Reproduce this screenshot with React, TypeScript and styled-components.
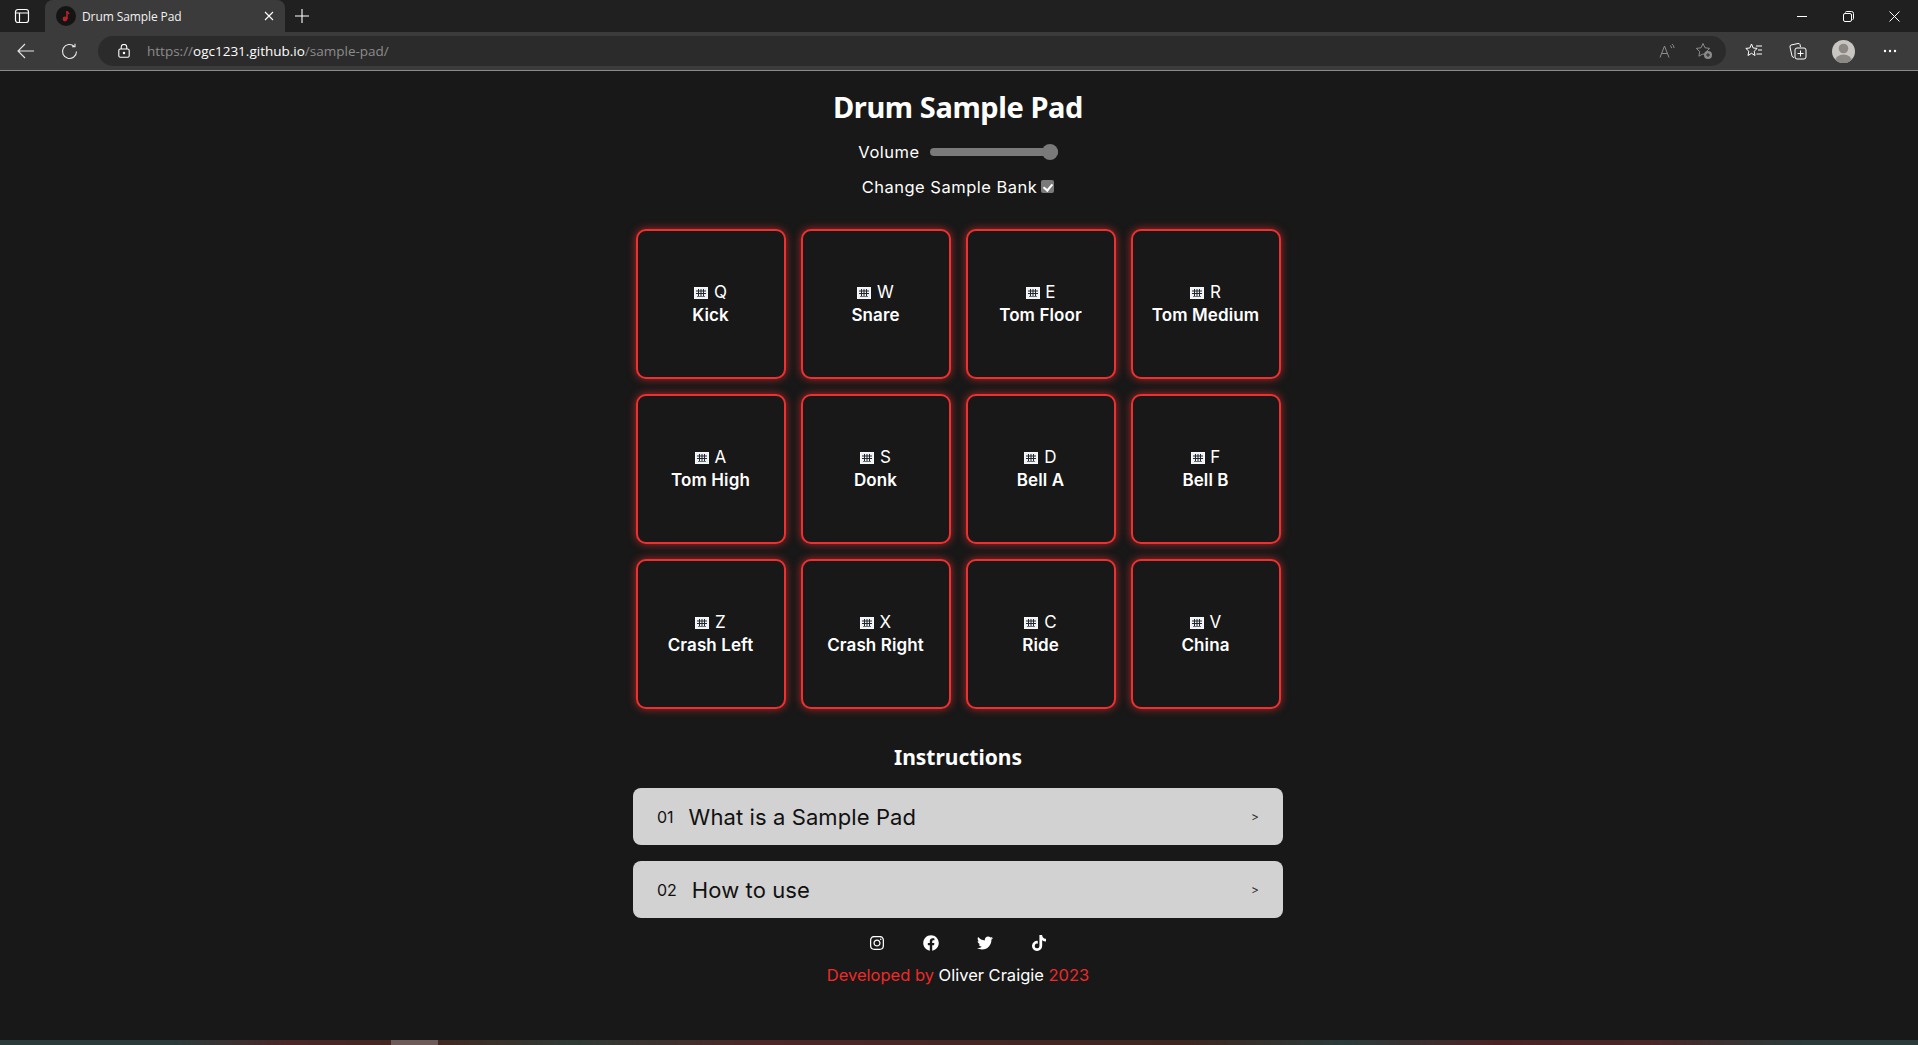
import React from "react"
import styled, {createGlobalStyle} from "styled-components"
import {FaFacebook, FaInstagram, FaTiktok, FaTwitter} from "react-icons/fa"

const pads = [
    {key: "Q", name: "Kick"},
    {key: "W", name: "Snare"},
    {key: "E", name: "Tom Floor"},
    {key: "R", name: "Tom Medium"},
    {key: "A", name: "Tom High"},
    {key: "S", name: "Donk"},
    {key: "D", name: "Bell A"},
    {key: "F", name: "Bell B"},
    {key: "Z", name: "Crash Left"},
    {key: "X", name: "Crash Right"},
    {key: "C", name: "Ride"},
    {key: "V", name: "China"},
]

const KeyboardIcon = () => (
    <KeyIcon viewBox="0 0 14 12" aria-hidden="true">
        <rect x="0" y="0" width="14" height="12" fill="#f8f8f8" />
        <rect x="1" y="1" width="12" height="10" fill="#eef2f6" />
        <path d="M2 4h10M2 6.500h10M4.500 2v7M7 2v7M9.500 2v7" stroke="#23262b" strokeWidth="1" fill="none" />
        <path d="M3 9.500h8" stroke="#6a6f76" strokeWidth="1" />
    </KeyIcon>
)

function Browser()
{
    return (
        <Chrome>
            <TabStrip>
                <ChromeIcon width="16" height="16" viewBox="0 0 16 16" fill="none" stroke="#fff" strokeWidth="1.2" style={{marginLeft: 14}}>
                    <rect x="1.500" y="1.500" width="13" height="13" rx="2.500" />
                    <path d="M1.500 5h13M5.500 5v9.500" />
                </ChromeIcon>
                <Tab>
                    <Favicon>
                        <svg width="10" height="12" viewBox="0 0 10 12" fill="none" stroke="#b5232b" strokeWidth="1.6">
                            <path d="M6 1v8" />
                            <circle cx="4" cy="9" r="1.600" fill="#b5232b" />
                            <path d="M6 1.200c.4 1.400 1.600 1.800 2.200 2.800" />
                        </svg>
                    </Favicon>
                    <TabTitle>Drum Sample Pad</TabTitle>
                    <svg width="10" height="10" viewBox="0 0 10 10" stroke="#fff" strokeWidth="1.1">
                        <path d="M1 1l8 8M9 1l-8 8" />
                    </svg>
                </Tab>
                <ChromeIcon width="14" height="14" viewBox="0 0 14 14" stroke="#fff" strokeWidth="1.1" style={{marginLeft: 10}}>
                    <path d="M7 0v14M0 7h14" />
                </ChromeIcon>
                <WindowControls>
                    <svg width="11" height="11" viewBox="0 0 11 11" stroke="#fff" strokeWidth="1"><path d="M0 5.500h10" /></svg>
                    <svg width="11" height="11" viewBox="0 0 11 11" fill="none" stroke="#fff" strokeWidth="1">
                        <rect x="0.500" y="2.500" width="8" height="8" rx="1.500" />
                        <path d="M2.500 1.500q0-1 1-1h5q2 0 2 2v5q0 1-1 1" />
                    </svg>
                    <svg width="11" height="11" viewBox="0 0 11 11" stroke="#fff" strokeWidth="1"><path d="M.5.5l10 10M10.500.5l-10 10" /></svg>
                </WindowControls>
            </TabStrip>
            <Toolbar>
                <ChromeIcon width="18" height="16" viewBox="0 0 18 16" fill="none" stroke="#e8e8e8" strokeWidth="1.1" style={{marginLeft: 17}}>
                    <path d="M17 8H1M8 1L1 8l7 7" />
                </ChromeIcon>
                <ChromeIcon width="17" height="17" viewBox="0 0 17 17" fill="none" stroke="#e8e8e8" strokeWidth="1.1" style={{marginLeft: 26}}>
                    <path d="M15.500 8.500a7 7 0 1 1-2.200-5.100M14 .8v3h-3" />
                </ChromeIcon>
                <AddressBar>
                    <svg width="12" height="14" viewBox="0 0 12 14" fill="none" stroke="#fff" strokeWidth="1.1">
                        <rect x="0.800" y="5" width="10.400" height="8.200" rx="1.500" />
                        <path d="M3.200 5V3.200a2.800 2.800 0 0 1 5.600 0V5" />
                        <circle cx="6" cy="9" r="0.700" fill="#fff" />
                    </svg>
                    <Url>https://<b>ogc1231.github.io</b>/sample-pad/</Url>
                    <AddressActions>
                        <svg width="16" height="16" viewBox="0 0 16 16" fill="none" stroke="#8c8c8c" strokeWidth="1">
                            <path d="M1 14.500L5.500 3l4.500 11.500M2.700 10.500h5.600M11 2.500q1.600.8 1.600 2.600M13 1q2 1.300 2 4" />
                        </svg>
                        <svg width="18" height="18" viewBox="0 0 18 18" fill="none" stroke="#8c8c8c" strokeWidth="1">
                            <path d="M8 1.500l2 4.300 4.700.6-3.400 3.200.8 4.600L8 11.900l-4.100 2.300.8-4.600L1.300 6.400l4.700-.6z" />
                            <circle cx="13" cy="13" r="4" fill="#8c8c8c" stroke="none" />
                            <path d="M13 11v4M11 13h4" stroke="#2b2b2b" />
                        </svg>
                    </AddressActions>
                </AddressBar>
                <ToolActions>
                    <svg width="18" height="18" viewBox="0 0 18 18" fill="none" stroke="#fff" strokeWidth="1">
                        <path d="M6.500 2l1.700 4 4 .4-3 2.800.8 4.300-3.500-2.200-3.500 2.200.8-4.300-3-2.800 4-.4zM11 4h6M13 8h4M11.500 12H17" />
                    </svg>
                    <svg width="18" height="18" viewBox="0 0 18 18" fill="none" stroke="#fff" strokeWidth="1">
                        <path d="M5 15.500q-1.500 0-2-1.500L1 5q-.3-1.500 1-2l7-1.500q1.500-.2 2 1L11.500 5" />
                        <rect x="6" y="6" width="11" height="11" rx="2" />
                        <path d="M11.500 8.500v6M8.500 11.500h6" />
                    </svg>
                    <Avatar>
                        <svg width="23" height="23" viewBox="0 0 23 23">
                            <circle cx="11.500" cy="8.500" r="4.800" fill="#8c8985" />
                            <ellipse cx="11.500" cy="21" rx="8.500" ry="6.500" fill="#8c8985" />
                        </svg>
                    </Avatar>
                    <svg width="14" height="4" viewBox="0 0 14 4" fill="#fff">
                        <circle cx="2" cy="2" r="1.200" />
                        <circle cx="7" cy="2" r="1.200" />
                        <circle cx="12" cy="2" r="1.200" />
                    </svg>
                </ToolActions>
            </Toolbar>
        </Chrome>
    )
}

export default function App()
{
    return (
        <Page>
            <GlobalStyle />
            <Browser />
            <Main>
                <Title>Drum Sample Pad</Title>
                <VolumeRow>
                    <label htmlFor="volume">Volume</label>
                    <VolumeSlider id="volume" type="range" min="0" max="1" step="0.01" defaultValue="1" />
                </VolumeRow>
                <BankRow>
                    <label htmlFor="bank">Change Sample Bank</label>
                    <BankCheck id="bank" type="checkbox" defaultChecked />
                </BankRow>
                <PadGrid>
                    {pads.map(pad => (
                        <Pad key={pad.key}>
                            <PadKey><KeyboardIcon /> {pad.key}</PadKey>
                            <PadName>{pad.name}</PadName>
                        </Pad>
                    ))}
                </PadGrid>
                <Instructions>Instructions</Instructions>
                <Accordion>
                    <AccordionItem>
                        <ItemNumber>01</ItemNumber>
                        <ItemTitle>What is a Sample Pad</ItemTitle>
                        <ItemArrow>&gt;</ItemArrow>
                    </AccordionItem>
                    <AccordionItem>
                        <ItemNumber>02</ItemNumber>
                        <ItemTitle>How to use</ItemTitle>
                        <ItemArrow>&gt;</ItemArrow>
                    </AccordionItem>
                </Accordion>
                <Socials>
                    <FaInstagram />
                    <FaFacebook />
                    <FaTwitter />
                    <FaTiktok />
                </Socials>
                <Footer>Developed by <span>Oliver Craigie</span> 2023</Footer>
            </Main>
            <TaskStrip><TaskThumb /></TaskStrip>
        </Page>
    )
}

const GlobalStyle = createGlobalStyle`
    html, body {
        margin: 0;
        height: 100%;
        background: #181818;
    }
    * {
        box-sizing: border-box;
    }
`

const Page = styled.div`
    height: 1045px;
    display: flex;
    flex-direction: column;
    overflow: hidden;
    background: #181818;
    color: #fff;
    font-family: Inter, "Noto Sans", sans-serif;
`

const Chrome = styled.div`
    flex: none;
    height: 71px;
    border-bottom: 1px solid #8a8a8a;
`

const TabStrip = styled.div`
    height: 32px;
    display: flex;
    align-items: center;
    background: #202020;
`

const ChromeIcon = styled.svg`
    flex: none;
`

const Tab = styled.div`
    width: 240px;
    height: 32px;
    margin-left: 15px;
    padding: 0 11px;
    display: flex;
    align-items: center;
    background: #3b3b3b;
    border-radius: 8px 8px 0 0;
`

const Favicon = styled.span`
    width: 20px;
    height: 20px;
    flex: none;
    display: flex;
    align-items: center;
    justify-content: center;
    background: #141414;
    border-radius: 50%;
`

const TabTitle = styled.span`
    flex: 1;
    margin-left: 6px;
    font: 12px "Open Sans", sans-serif;
    letter-spacing: -0.1px;
    color: #f2f2f2;
`

const WindowControls = styled.div`
    margin-left: auto;
    margin-right: 18px;
    display: flex;
    align-items: center;
    gap: 35px;
`

const Toolbar = styled.div`
    height: 38px;
    display: flex;
    align-items: center;
    background: #3b3b3b;
`

const AddressBar = styled.div`
    width: 1628px;
    height: 30px;
    margin-left: 20px;
    padding: 0 13px 0 20px;
    display: flex;
    align-items: center;
    background: #2b2b2b;
    border-radius: 15px;
`

const Url = styled.span`
    margin-left: 17px;
    font: 13.5px "Open Sans", sans-serif;
    color: #8b8b8b;

    b {
        font-weight: 400;
        color: #fff;
    }
`

const AddressActions = styled.div`
    margin-left: auto;
    display: flex;
    align-items: center;
    gap: 20px;
`

const ToolActions = styled.div`
    flex: 1;
    padding: 0 21px 0 19px;
    display: flex;
    align-items: center;
    justify-content: space-between;
`

const Avatar = styled.span`
    width: 23px;
    height: 23px;
    margin-right: 2px;
    overflow: hidden;
    border-radius: 50%;
    background: #c9c6c1;
`

const Main = styled.main`
    flex: 1;
    padding-right: 2px;
    display: flex;
    flex-direction: column;
    align-items: center;
`

const Title = styled.h1`
    margin: 14px 0 0;
    font: 700 29px/44px "Noto Sans", sans-serif;
    letter-spacing: -0.4px;
`

const VolumeRow = styled.div`
    margin-top: 11px;
    height: 24px;
    display: flex;
    align-items: center;
    gap: 10px;
    font-size: 16.500px;
    letter-spacing: 0.5px;
`

const VolumeSlider = styled.input`
    appearance: none;
    width: 128px;
    height: 8px;
    margin: 0;
    background: #7a7a7a;
    border-radius: 4px;

    &::-webkit-slider-thumb {
        appearance: none;
        width: 16px;
        height: 16px;
        background: #7a7a7a;
        border-radius: 50%;
    }
`

const BankRow = styled.div`
    margin-top: 11px;
    height: 24px;
    display: flex;
    align-items: center;
    gap: 4px;
    font-size: 16.500px;
    letter-spacing: 0.5px;
`

const BankCheck = styled.input`
    appearance: none;
    position: relative;
    width: 13px;
    height: 13px;
    margin: 0 0 1px;
    background: #7a7a7a;
    border-radius: 2px;

    &::after {
        content: "";
        position: absolute;
        left: 4px;
        top: 1.500px;
        width: 4px;
        height: 7px;
        border: solid #fff;
        border-width: 0 2px 2px 0;
        transform: rotate(40deg);
    }
`

const PadGrid = styled.div`
    margin-top: 30px;
    display: grid;
    grid-template-columns: repeat(4, 150px);
    grid-auto-rows: 150px;
    gap: 15px;
`

const Pad = styled.button`
    display: flex;
    flex-direction: column;
    align-items: center;
    justify-content: center;
    padding: 0;
    background: #181818;
    color: #fff;
    border: 2px solid #ee3030;
    border-radius: 10px;
    box-shadow: 0 0 8px #d02a2acc;
    font-family: inherit;
`

const PadKey = styled.span`
    font-size: 17px;
    line-height: 23px;
`

const KeyIcon = styled.svg`
    width: 14px;
    height: 12px;
    margin-right: 1px;
    vertical-align: -1px;
`

const PadName = styled.span`
    font-size: 17px;
    font-weight: 600;
    letter-spacing: 0.1px;
    line-height: 23px;
`

const Instructions = styled.h2`
    margin: 32px 0 0;
    font: 700 21px/32px "Noto Sans", sans-serif;
`

const Accordion = styled.div`
    margin-top: 15px;
    width: 650px;
    display: flex;
    flex-direction: column;
    gap: 16px;
`

const AccordionItem = styled.div`
    height: 57px;
    padding: 0 24px;
    display: flex;
    align-items: center;
    gap: 15px;
    background: #d2d2d2;
    color: #111;
    border-radius: 8px;
`

const ItemNumber = styled.span`
    font-size: 16px;
`

const ItemTitle = styled.span`
    flex: 1;
    font-size: 22px;
    letter-spacing: 0.1px;
`

const ItemArrow = styled.span`
    font-size: 12px;
    color: #333;
`

const Socials = styled.div`
    margin-top: 13px;
    height: 24px;
    display: flex;
    align-items: center;
    gap: 38px;
    font-size: 16px;
`

const Footer = styled.div`
    margin-top: 8px;
    font-size: 16.500px;
    line-height: 24px;
    color: #ee2a2a;

    span {
        color: #fff;
    }
`

const TaskStrip = styled.div`
    flex: none;
    height: 5px;
    background: linear-gradient(90deg, #2a3b3a 0%, #2a3b3a 9%, #4a2628 15%, #42261f 22%, #2f3a35 30%, #4d2627 40%, #3c2620 62%, #2a3b3a 70%, #4a2225 78%, #4a2628 86%, #2a3b3a 94%);
`

const TaskThumb = styled.div`
    width: 47px;
    height: 5px;
    margin-left: 391px;
    background: #6e5a58;
`
